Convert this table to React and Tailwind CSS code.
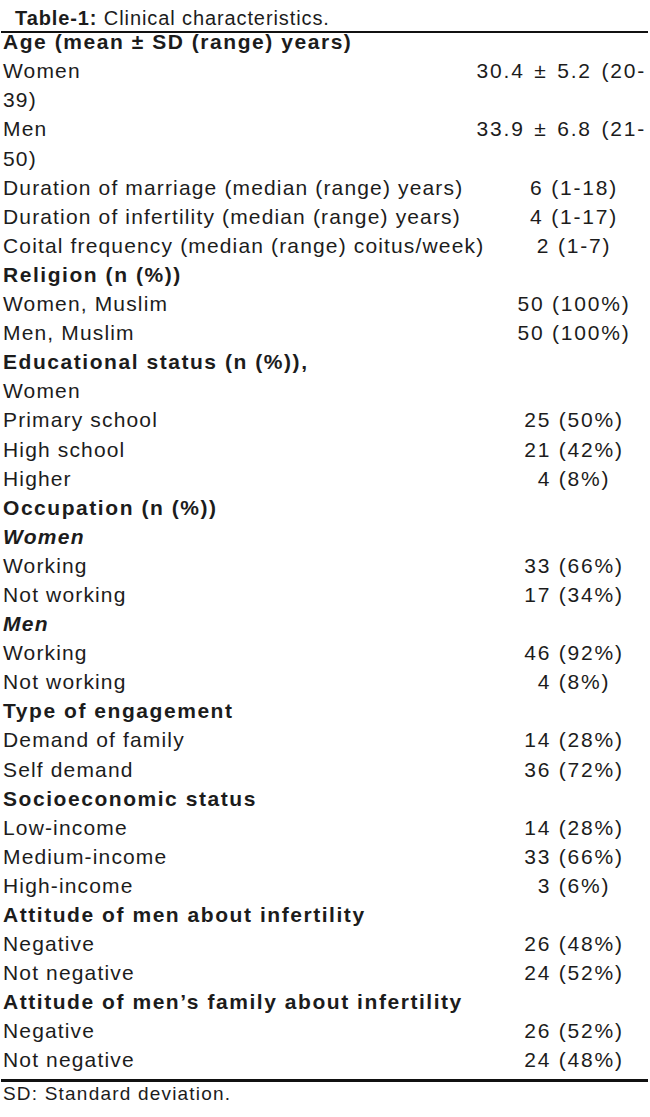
import React from 'react';

const rows = [
  { label: 'Age (mean ± SD (range) years)', type: 'head' },
  { label: 'Women', value: '30.4 ± 5.2 (20-', wide: true },
  { label: '39)' },
  { label: 'Men', value: '33.9 ± 6.8 (21-', wide: true },
  { label: '50)' },
  { label: 'Duration of marriage (median (range) years)', value: '6 (1-18)' },
  { label: 'Duration of infertility (median (range) years)', value: '4 (1-17)' },
  { label: 'Coital frequency (median (range) coitus/week)', value: '2 (1-7)' },
  { label: 'Religion (n (%))', type: 'head' },
  { label: 'Women, Muslim', value: '50 (100%)' },
  { label: 'Men, Muslim', value: '50 (100%)' },
  { label: 'Educational status (n (%)),', type: 'head' },
  { label: 'Women' },
  { label: 'Primary school', value: '25 (50%)' },
  { label: 'High school', value: '21 (42%)' },
  { label: 'Higher', value: '4 (8%)' },
  { label: 'Occupation (n (%))', type: 'head' },
  { label: 'Women', type: 'sub' },
  { label: 'Working', value: '33 (66%)' },
  { label: 'Not working', value: '17 (34%)' },
  { label: 'Men', type: 'sub' },
  { label: 'Working', value: '46 (92%)' },
  { label: 'Not working', value: '4 (8%)' },
  { label: 'Type of engagement', type: 'head' },
  { label: 'Demand of family', value: '14 (28%)' },
  { label: 'Self demand', value: '36 (72%)' },
  { label: 'Socioeconomic status', type: 'head' },
  { label: 'Low-income', value: '14 (28%)' },
  { label: 'Medium-income', value: '33 (66%)' },
  { label: 'High-income', value: '3 (6%)' },
  { label: 'Attitude of men about infertility', type: 'head' },
  { label: 'Negative', value: '26 (48%)' },
  { label: 'Not negative', value: '24 (52%)' },
  { label: 'Attitude of men’s family about infertility', type: 'head' },
  { label: 'Negative', value: '26 (52%)' },
  { label: 'Not negative', value: '24 (48%)' },
];

const Row = ({ row }) => {
  if (row.type === 'head') {
    return (
      <div className="h-[29.1px] leading-[29.1px] font-bold tracking-[1.55px] whitespace-nowrap">
        {row.label}
      </div>
    );
  }
  if (row.type === 'sub') {
    return (
      <div className="h-[29.1px] leading-[29.1px] font-bold italic tracking-[1.3px]">
        {row.label}
      </div>
    );
  }
  return (
    <div className="flex h-[29.1px] leading-[29.1px] whitespace-nowrap">
      <div className="flex-1 tracking-[1.15px]">{row.label}</div>
      {row.value && (
        row.wide ? (
          <div className="w-[180px] text-right pr-[4px] tracking-[1.8px] [word-spacing:2px]">{row.value}</div>
        ) : (
          <div className="w-[152px] text-center tracking-[1.8px]">{row.value}</div>
        )
      )}
    </div>
  );
};

const App = () => {
  return (
    <div className="w-[650px] h-[1117px] bg-white text-[#1c1c1c] font-['Liberation_Sans',Arial,sans-serif] overflow-hidden">
      <div className="pt-[6px] pl-[15px] text-[20px] leading-[24px] tracking-[0.9px]">
        <span className="font-bold">Table-1:</span> Clinical characteristics.
      </div>
      <div className="mt-[1px] ml-[1px] mr-[2px] h-[2px] bg-[#111]"></div>

      <div className="-mt-[5.8px] pl-[3px] text-[21px]">
        {rows.map((row, idx) => (
          <Row key={idx} row={row} />
        ))}
      </div>

      <div className="mt-[4px] ml-[1px] mr-[2px] h-[3px] bg-[#111]"></div>
      <div className="pl-[3px] text-[19px] leading-[24px] tracking-[1.2px]">
        SD: Standard deviation.
      </div>
    </div>
  );
};

export default App;
